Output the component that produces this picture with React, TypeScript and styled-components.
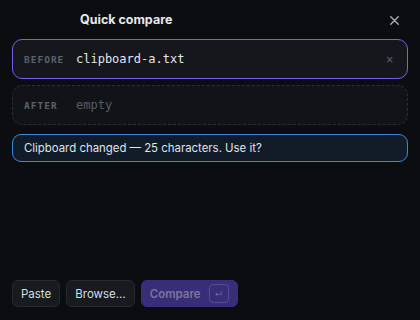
import React from "react";
import styled, { createGlobalStyle } from "styled-components";

const Global = createGlobalStyle`
  html, body { margin: 0; padding: 0; background: #0c0d10; }
  body { width: 420px; height: 320px; overflow: hidden; font-family: Inter, "Noto Sans", sans-serif; }
`;

const Dialog = styled.div`
  width: 420px;
  height: 320px;
  box-sizing: border-box;
  padding: 0 12px 13px;
  display: flex;
  flex-direction: column;
  background: #0c0d10;
`;

const Header = styled.div`
  height: 39px;
  display: flex;
  align-items: center;
  justify-content: space-between;
  padding-left: 68px;
`;

const Title = styled.h1`
  margin: 0;
  font-size: 12.5px;
  font-weight: 700;
  color: #e6e8ec;
`;

const Close = styled.button`
  background: none;
  border: none;
  padding: 0;
  width: 16px;
  height: 16px;
  margin-right: 6px;
  margin-top: 2px;
  display: flex;
  align-items: center;
  justify-content: center;
  color: #a9adb6;
  cursor: pointer;
`;

const Slot = styled.div<{ $variant: "filled" | "empty" }>`
  height: 40px;
  box-sizing: border-box;
  border-radius: 10px;
  display: flex;
  align-items: center;
  padding: 0 13px 0 11px;
  background: ${(p) => (p.$variant === "filled" ? "#15171c" : "#121317")};
  border: 1px ${(p) => (p.$variant === "filled" ? "solid #7263e6" : "dashed #2c2f36")};
  margin-bottom: 6px;
`;

const SlotLabel = styled.span`
  width: 52px;
  flex: none;
  font-family: "DejaVu Sans Mono", monospace;
  font-size: 9.5px;
  font-weight: 700;
  letter-spacing: 1px;
  color: #5b616c;
`;

const SlotValue = styled.span<{ $muted?: boolean }>`
  flex: 1;
  font-family: "DejaVu Sans Mono", monospace;
  font-size: 12px;
  color: ${(p) => (p.$muted ? "#565b65" : "#e3e5ea")};
`;

const Clear = styled.span`
  color: #5e626b;
  font-size: 10px;
  font-family: "DejaVu Sans", sans-serif;
`;

const Notice = styled.div`
  margin-top: 3px;
  height: 28px;
  box-sizing: border-box;
  border: 1px solid #3f86d4;
  border-radius: 9px;
  background: #121c29;
  display: flex;
  align-items: center;
  padding: 0 11px;
  font-size: 11.4px;
  color: #dfe3ea;
`;

const Spacer = styled.div`
  flex: 1;
`;

const Footer = styled.div`
  display: flex;
  gap: 6px;
  align-items: center;
`;

const Button = styled.button<{ $primary?: boolean }>`
  height: 27px;
  box-sizing: border-box;
  border-radius: 6px;
  padding: 0 ${(p) => (p.$primary ? "8px" : "8px")};
  font-family: Inter, "Noto Sans", sans-serif;
  font-size: 11.5px;
  font-weight: ${(p) => (p.$primary ? 600 : 400)};
  display: flex;
  align-items: center;
  gap: 8px;
  border: 1px solid ${(p) => (p.$primary ? "#3a2f7c" : "#262a31")};
  background: ${(p) => (p.$primary ? "#382d78" : "#171a1f")};
  color: ${(p) => (p.$primary ? "#7b7699" : "#d9dce2")};
`;

const Kbd = styled.span`
  width: 20px;
  height: 19px;
  box-sizing: border-box;
  border: 1px solid #574d96;
  border-radius: 4px;
  display: flex;
  align-items: center;
  justify-content: center;
  font-size: 8px;
  color: #6d6798;
`;

export default function App() {
  return (
    <>
      <Global />
      <Dialog>
        <Header>
          <Title>Quick compare</Title>
          <Close aria-label="Close">
            <svg width="9" height="9" viewBox="0 0 9 9">
              <path d="M0.75 0.75L8.25 8.25M8.25 0.75L0.75 8.25" stroke="currentColor" strokeWidth="1.4" strokeLinecap="round" />
            </svg>
          </Close>
        </Header>
        <Slot $variant="filled">
          <SlotLabel>BEFORE</SlotLabel>
          <SlotValue>clipboard-a.txt</SlotValue>
          <Clear>×</Clear>
        </Slot>
        <Slot $variant="empty">
          <SlotLabel>AFTER</SlotLabel>
          <SlotValue $muted>empty</SlotValue>
        </Slot>
        <Notice>Clipboard changed — 25 characters. Use it?</Notice>
        <Spacer />
        <Footer>
          <Button>Paste</Button>
          <Button>Browse…</Button>
          <Button $primary>
            Compare
            <Kbd>↵</Kbd>
          </Button>
        </Footer>
      </Dialog>
    </>
  );
}
